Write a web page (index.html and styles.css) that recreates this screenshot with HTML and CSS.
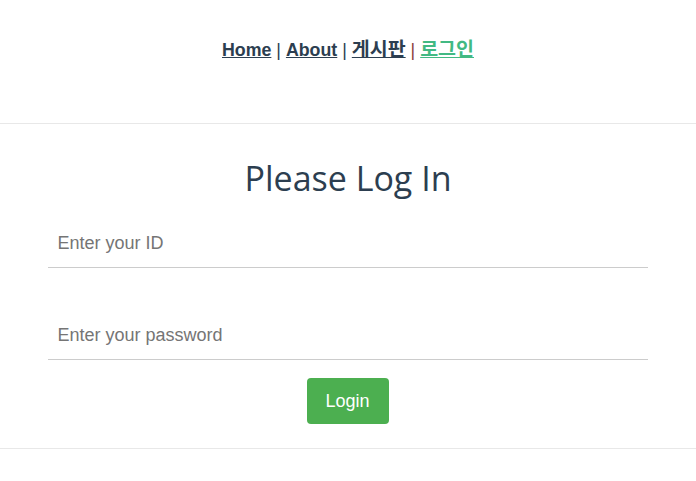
FILE: index.html
```html
<!DOCTYPE html>
<html lang="ko">
<head>
<meta charset="utf-8">
<title>Login</title>
<link rel="stylesheet" href="styles.css">
</head>
<body>
<div class="app">
  <nav class="nav">
    <a href="#" class="nav-link">Home</a> <span class="sep">|</span>
    <a href="#" class="nav-link">About</a> <span class="sep">|</span>
    <a href="#" class="nav-link ko">게시판</a> <span class="sep sep-red">|</span>
    <a href="#" class="nav-link ko active">로그인</a>
  </nav>
  <hr class="rule">
  <main class="login">
    <h1 class="title">Please Log In</h1>
    <form class="form">
      <input class="field" type="text" placeholder="Enter your ID">
      <input class="field field-second" type="password" placeholder="Enter your password">
      <button class="btn" type="button">Login</button>
    </form>
  </main>
  <hr class="rule">
</div>
</body>
</html>
```
FILE: styles.css
```css
html, body {
  margin: 0;
  padding: 0;
  background: #fff;
}
body {
  font-family: "Liberation Sans", Arial, "Noto Sans CJK KR", sans-serif;
  color: #2c3e50;
  text-align: center;
}
.nav {
  height: 123px;
  box-sizing: border-box;
  padding-top: 37px;
  font-size: 17.8px;
  line-height: 22px;
}
.nav-link {
  font-weight: bold;
  color: #2c3e50;
}
.nav-link.ko {
  font-family: "Noto Sans CJK KR", sans-serif;
  font-size: 19.5px;
}
.nav-link.active {
  color: #42b983;
}
.sep {
  color: #2c3e50;
  font-weight: normal;
}
.sep-red {
  color: #8b3a3a;
}
.rule {
  margin: 0;
  border: 0;
  height: 0;
  border-top: 1px solid #e8e8e8;
}
.login {
  display: flex;
  flex-direction: column;
  align-items: center;
}
.title {
  margin: 34px 0 0;
  font-family: "Open Sans", sans-serif;
  font-weight: 400;
  font-size: 34px;
  line-height: 40px;
  color: #2c3e50;
}
.form {
  width: 600px;
  display: flex;
  flex-direction: column;
  align-items: center;
  margin-top: 22px;
  margin-right: 1px;
}
.field {
  width: 100%;
  box-sizing: border-box;
  height: 48px;
  padding: 0 10px;
  border: 0;
  border-bottom: 1px solid #cccccc;
  font-family: "Liberation Sans", Arial, sans-serif;
  font-size: 18px;
  color: #333;
  outline: none;
  background: transparent;
}
.field::placeholder {
  color: #757575;
}
.field-second {
  margin-top: 44px;
}
.btn {
  margin-top: 18px;
  width: 82px;
  height: 46px;
  border: 0;
  border-radius: 4px;
  background: #4caf50;
  color: #fff;
  font-family: "Liberation Sans", Arial, sans-serif;
  font-size: 18px;
  margin-bottom: 24px;
}
```
